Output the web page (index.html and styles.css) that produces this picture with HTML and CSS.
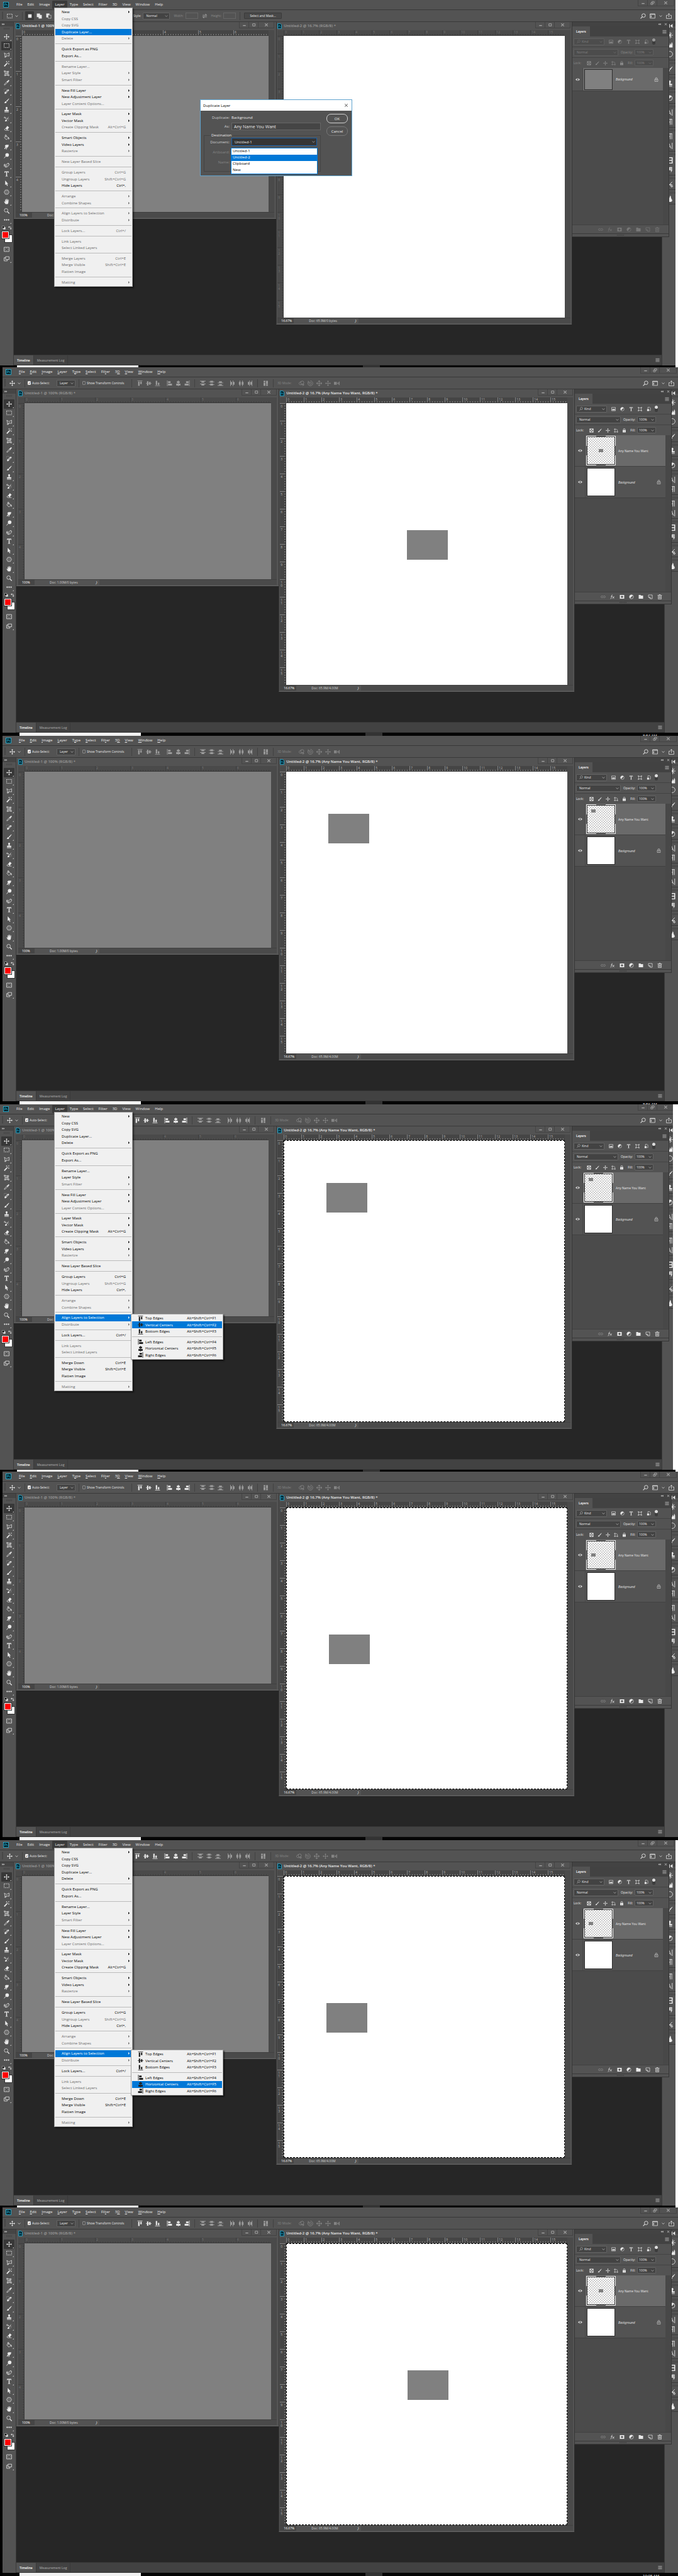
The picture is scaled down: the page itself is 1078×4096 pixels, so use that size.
FILE: index.html
```html
<!DOCTYPE html>
<html lang="en">
<head>
<meta charset="utf-8">
<title>Duplicate and align a layer</title>
<link rel="stylesheet" href="styles.css">
</head>
<body>
<svg class="sprite" aria-hidden="true">
  <symbol id="ps" viewBox="0 0 18 18"><rect x="1" y="1" width="16" height="16" fill="#001d26" stroke="#26c0e6" stroke-width="1.6"/><path d="M5 13V5h2.4a2.3 2.3 0 0 1 0 4.6H5M13.4 7.6c-2-.8-3 .2-2.6 1.2.4 1 2.800.9 2.600 2.400-.3 1.300-2 1.200-3 .6" fill="none" stroke="#26c0e6" stroke-width="1.300"/></symbol>
  <symbol id="psdoc" viewBox="0 0 12 15"><path d="M1 1h7l3 3v10H1z" fill="#001d26" stroke="#26b4dc" stroke-width="1.500"/><path d="M3.500 11V5.500H5a1.500 1.500 0 0 1 0 3H3.500M9 7.500c-1.500-.5-1.800.8-.8 1.300 1 .5.5 1.800-.9 1.200" fill="none" stroke="#26b4dc"/></symbol>
  <symbol id="move" viewBox="0 0 16 16"><path d="M8 2v12M2 8h12" stroke="currentColor" stroke-width="1.400"/><path d="M8 0l2.500 3.400h-5zM8 16l2.500-3.400h-5zM0 8l3.400-2.500v5zM16 8l-3.400-2.500v5z" fill="currentColor"/></symbol>
  <symbol id="marquee" viewBox="0 0 16 16"><path d="M1 2.500h14v11H1z" fill="none" stroke="currentColor" stroke-width="1.400" stroke-dasharray="3 1.700"/></symbol>
  <symbol id="lasso" viewBox="0 0 16 16"><path d="M4 12L1.500 2l6 4L15 2v9l-7-1-4 2c-2 0-2 3 0 2.500 1-.5 1-1.500 0-2.500m4-2l-3 5" fill="none" stroke="currentColor" stroke-width="1.300"/></symbol>
  <symbol id="wand" viewBox="0 0 16 16"><path d="M1.500 15L9 7" stroke="currentColor" stroke-width="3"/><path d="M9.500 6.500l2-2" stroke="currentColor" stroke-width="2"/><path d="M8 0v4M6 2h4M14 0v3M12.500 1.500h3M14 6v4M12 8h4" stroke="currentColor"/></symbol>
  <symbol id="crop" viewBox="0 0 16 16"><path d="M3 2l9 1 1 10-9 1zM1 1h3v3H1zM11 2h3v3h-3zM12 12h3v3h-3zM2 12h3v3H2zM7 3v11M3 8h10M10 3v11" fill="none" stroke="currentColor"/></symbol>
  <symbol id="dropper" viewBox="0 0 16 16"><path d="M1.500 14.500l1-3 6-6 2 2-6 6z" fill="none" stroke="currentColor" stroke-width="1.300"/><path d="M8 4l1-1 1 1 2.500-3c1.500-1.500 4 1 2.500 2.500L12 6l1 1-1 1z" fill="currentColor"/></symbol>
  <symbol id="heal" viewBox="0 0 16 16"><path d="M2 11l8-8 4-1 1 3-9 9-3 1z" fill="currentColor"/><path d="M6 9l4-4 2 2-4 4zM7 10l4-4M7 8l2 2" fill="none" stroke="#535353"/><path d="M1 9a4 4 0 0 1 7-7" fill="none" stroke="currentColor" stroke-dasharray="1 1"/></symbol>
  <symbol id="brush" viewBox="0 0 16 16"><path d="M14.500 1L7 8l2 2 6-8zM6 9c-3 0-2 3-5 5 4 1 7 0 7-3z" fill="currentColor"/></symbol>
  <symbol id="stamp" viewBox="0 0 16 16"><path d="M8 0a3 3 0 0 1 2 5c-1 1-.5 2-.5 3.500H14V12H2V8.500h4.500C6.500 7 7 6 6 5a3 3 0 0 1 2-5zM2 13.500h12V15H2z" fill="currentColor"/></symbol>
  <symbol id="history" viewBox="0 0 16 16"><path d="M14.500 0L8 8l2 1zM7 9c-3 0-2 3-4 5 4 1 6-1 6-3z" fill="currentColor"/><path d="M1 4h5M6 4v3M1 4l2-3" fill="none" stroke="currentColor" stroke-width="1.500"/><path d="M14 6c0 4-1 6-4 8" fill="none" stroke="currentColor" stroke-dasharray="1 1"/></symbol>
  <symbol id="eraser" viewBox="0 0 16 16"><path d="M5 9l5-7 5 4-5 7z" fill="currentColor"/><path d="M5 9l-3.500 3.500L4 14.500h11M5 9l5 4-1.500 1.500" fill="none" stroke="currentColor" stroke-width="1.300"/></symbol>
  <symbol id="bucket" viewBox="0 0 16 16"><path d="M1.500 8.500L7 3l6 6-5.500 5.500zM7 8V2c0-2-3-2-3 0v4" fill="none" stroke="currentColor" stroke-width="1.300"/><path d="M12 7c3 1 4 4 3 6s-2 0-2-2z" fill="currentColor"/></symbol>
  <symbol id="smudge" viewBox="0 0 16 16"><path d="M3 14c-2 1-2-1 0-3L5 7 3 6c0-3 3-4 6-4h5l-1 5-4 4-1 4H6l2-6z" fill="currentColor"/></symbol>
  <symbol id="dodge" viewBox="0 0 16 16"><circle cx="9.500" cy="6" r="5" fill="currentColor"/><path d="M6 9l-5 6" stroke="currentColor" stroke-width="1.600"/></symbol>
  <symbol id="pen" viewBox="0 0 16 16"><path d="M5 14c-2-5 3-10 8-11l2 3c-1 5-5 8-10 8zm0 0l5-6M4 5c-3 0-4 3-2 4s3-2 1-2-3 4 0 6M12 2l3 4" fill="none" stroke="currentColor" stroke-width="1.400"/></symbol>
  <symbol id="type" viewBox="0 0 16 16"><path d="M2 1h12v4h-1.300l-.7-2H9.300v10.500l2 .5v1H4.700v-1l2-.5V3H4l-.7 2H2z" fill="currentColor"/></symbol>
  <symbol id="arrow" viewBox="0 0 16 16"><path d="M4 0l9 10-4-.500 2.500 5-2 1L7 10.500 4 13z" fill="currentColor"/></symbol>
  <symbol id="hex" viewBox="0 0 16 16"><path d="M4.500 2h7L15 8l-3.500 6h-7L1 8z" fill="#6d6d6d" stroke="currentColor" stroke-width="1.200"/></symbol>
  <symbol id="hand" viewBox="0 0 16 16"><path d="M5 15C3 12 1 10 1 8c1-1 2 0 3 2V3c0-1 1.500-1 1.700 0L6 7l.500-6c0-1 1.700-1 1.700 0v6L9.500 1.500c.2-1 1.700-.8 1.600.2L11 7l1.300-4c.3-1 1.700-.6 1.500.4L13 10c0 3-1 4-2 5z" fill="currentColor"/></symbol>
  <symbol id="zoom" viewBox="0 0 16 16"><circle cx="6.500" cy="6" r="5" fill="none" stroke="currentColor" stroke-width="1.400"/><path d="M10 9.500l5.500 5.500" stroke="currentColor" stroke-width="2.200"/></symbol>
  <symbol id="dots" viewBox="0 0 16 16"><circle cx="2.500" cy="8" r="2" fill="currentColor"/><circle cx="8" cy="8" r="2" fill="currentColor"/><circle cx="13.500" cy="8" r="2" fill="currentColor"/></symbol>
  <symbol id="swap" viewBox="0 0 16 16"><path d="M3 5h8v8" fill="none" stroke="currentColor" stroke-width="1.800"/><path d="M5 1v8L0 5zM7 11h8l-4 5z" fill="currentColor"/></symbol>
  <symbol id="defaults" viewBox="0 0 16 16"><path d="M6 6h9v9H6z" fill="currentColor"/><path d="M1 1h9v9H1z" fill="#000" stroke="currentColor" stroke-width="1.500"/></symbol>
  <symbol id="mask" viewBox="0 0 16 16"><path d="M1 2h14v12H1z" fill="none" stroke="currentColor" stroke-width="1.400"/><circle cx="8" cy="8" r="3.800" fill="none" stroke="currentColor" stroke-dasharray="1 1"/></symbol>
  <symbol id="screenmode" viewBox="0 0 16 16"><path d="M5 2h10v8H5zM5 5H1v9h9v-4" fill="none" stroke="currentColor" stroke-width="1.400"/></symbol>
  <symbol id="chev" viewBox="0 0 8 8"><path d="M1 2.500l3 3 3-3" fill="none" stroke="currentColor" stroke-width="1.200"/></symbol>
  <symbol id="tri" viewBox="0 0 4 8"><path d="M0 0l4 4-4 4z" fill="currentColor"/></symbol>
  <symbol id="search" viewBox="0 0 16 16"><circle cx="9.500" cy="6.500" r="5" fill="none" stroke="currentColor" stroke-width="1.600"/><path d="M6 10l-5 5" stroke="currentColor" stroke-width="1.800"/></symbol>
  <symbol id="panel" viewBox="0 0 16 16"><path d="M1 2h14v12H1z" fill="none" stroke="currentColor" stroke-width="1.300"/><path d="M1 3h14M4 6v6" stroke="currentColor" stroke-width="2"/></symbol>
  <symbol id="share" viewBox="0 0 16 16"><path d="M5 6H1v9h14V6h-4M8 11V1M5 4l3-3 3 3" fill="none" stroke="currentColor" stroke-width="1.300"/></symbol>
  <symbol id="min" viewBox="0 0 16 16"><path d="M3 9h10v3H3z" fill="currentColor"/></symbol>
  <symbol id="max" viewBox="0 0 16 16"><path d="M4 4h9v8H4z" fill="none" stroke="currentColor" stroke-width="2.200"/></symbol>
  <symbol id="restore" viewBox="0 0 16 16"><path d="M6 3h8v6H6zM2 8h7v6H2z" fill="none" stroke="currentColor" stroke-width="2"/></symbol>
  <symbol id="close" viewBox="0 0 16 16"><path d="M3 3l10 10M13 3L3 13" stroke="currentColor" stroke-width="2.400"/></symbol>
  <symbol id="closethin" viewBox="0 0 16 16"><path d="M3 3l10 10M13 3L3 13" stroke="currentColor" stroke-width="1.600"/></symbol>
  <symbol id="burger" viewBox="0 0 16 16"><path d="M1 3h14M1 6.500h14M1 10h14M1 13.500h14" stroke="currentColor" stroke-width="1.500"/></symbol>
  <symbol id="collapse" viewBox="0 0 16 16"><path d="M8 3v10L2 8zM15 3v10L9 8z" fill="currentColor"/></symbol>
  <symbol id="expand" viewBox="0 0 16 16"><path d="M1 3v10l6-5zM8 3v10l6-5z" fill="currentColor"/></symbol>
  <symbol id="a-top" viewBox="0 0 16 16"><path d="M1 0h14v1.500H1zM3 3h4v12H3zM9 3h4v7H9z" fill="currentColor"/></symbol>
  <symbol id="a-vc" viewBox="0 0 16 16"><path d="M0 7h16v1.600H0zM3 2h4v12H3zM9 4h4v8H9z" fill="currentColor"/></symbol>
  <symbol id="a-bot" viewBox="0 0 16 16"><path d="M1 14h14v1.500H1zM3 1h4v12H3zM9 6h4v7H9z" fill="currentColor"/></symbol>
  <symbol id="a-left" viewBox="0 0 16 16"><path d="M1 0h1.500v16H1zM4 2h7v5H4zM4 9h11v5H4z" fill="currentColor"/></symbol>
  <symbol id="a-hc" viewBox="0 0 16 16"><path d="M7.200 0h1.600v16H7.200zM4 2h8v5H4zM2 9h12v5H2z" fill="currentColor"/></symbol>
  <symbol id="a-right" viewBox="0 0 16 16"><path d="M13.500 0H15v16h-1.500zM5 2h7v5H5zM1 9h11v5H1z" fill="currentColor"/></symbol>
  <symbol id="d-top" viewBox="0 0 16 16"><path d="M0 1h16v1.500H0zM4 2h8v4H4zM0 9h16v1.500H0zM4 10h8v4H4z" fill="currentColor"/></symbol>
  <symbol id="d-vc" viewBox="0 0 16 16"><path d="M0 3h16v1.500H0zM4 1h8v5H4zM0 11h16v1.500H0zM4 9h8v5H4z" fill="currentColor"/></symbol>
  <symbol id="d-bot" viewBox="0 0 16 16"><path d="M0 6h16v1.500H0zM4 2h8v5H4zM0 13.500h16V15H0zM4 10h8v4H4z" fill="currentColor"/></symbol>
  <symbol id="d-left" viewBox="0 0 16 16"><path d="M2 0h1.500v16H2zM3 4h4v8H3zM9 0h1.500v16H9zM10 4h4v8h-4z" fill="currentColor"/></symbol>
  <symbol id="d-hc" viewBox="0 0 16 16"><path d="M3.500 0H5v16H3.500zM1.500 4h5v8h-5zM11 0h1.500v16H11zM9.500 4h5v8h-5z" fill="currentColor"/></symbol>
  <symbol id="d-right" viewBox="0 0 16 16"><path d="M6 0h1.500v16H6zM2 4h4v8H2zM13 0h1.500v16H13zM9 4h4v8H9z" fill="currentColor"/></symbol>
  <symbol id="auto" viewBox="0 0 16 16"><path d="M2 1h5v4H2zM2 6h5v9H2zM9 1h5v9H9zM9 11h5v4H9z" fill="currentColor"/></symbol>
  <symbol id="orbit" viewBox="0 0 16 16"><circle cx="10" cy="6" r="4.500" fill="none" stroke="currentColor" stroke-width="1.500"/><path d="M7 3c-7 2-9 8-2 9h9M11 9l4 3-4 3" fill="none" stroke="currentColor" stroke-width="1.500"/></symbol>
  <symbol id="roll" viewBox="0 0 16 16"><circle cx="8" cy="8" r="3" fill="none" stroke="currentColor" stroke-width="1.500"/><path d="M3 3a7 7 0 1 0 5-2M2 1v4h4" fill="none" stroke="currentColor" stroke-width="1.500"/></symbol>
  <symbol id="slide" viewBox="0 0 16 16"><path d="M8 6V0L5 4M8 0l3 4M8 10v6l-3-4m3 4l3-4M6 8H0l4-3M0 8l4 3M10 8h6l-4-3m4 3l-4 3" fill="none" stroke="currentColor" stroke-width="1.500"/><circle cx="8" cy="8" r="2" fill="currentColor"/></symbol>
  <symbol id="cam" viewBox="0 0 16 16"><path d="M0 4h8v8H0zM9 8l4-4v8zM14 3l2 0v10l-2 0z" fill="currentColor"/></symbol>
  <symbol id="sel-new" viewBox="0 0 16 16"><path d="M3 3h10v10H3z" fill="currentColor"/></symbol>
  <symbol id="sel-add" viewBox="0 0 16 16"><path d="M1 1h9v4h5v10H6v-4H1z" fill="currentColor"/></symbol>
  <symbol id="sel-sub" viewBox="0 0 16 16"><path d="M1 1h9v4H6v7H1z" fill="currentColor"/><path d="M6.500 5.500h8v9h-8z" fill="none" stroke="currentColor"/></symbol>
  <symbol id="exchange" viewBox="0 0 16 16"><path d="M2 5h8V1l5 5.500H2zM14 11H6v4L1 9.500h13z" fill="currentColor"/></symbol>
  <symbol id="f-image" viewBox="0 0 16 16"><path d="M1 2h14v12H1z" fill="none" stroke="currentColor" stroke-width="1.500"/><path d="M3 12V9l2-2 2 2 3-3 3 3v3z" fill="currentColor"/></symbol>
  <symbol id="f-adjust" viewBox="0 0 16 16"><circle cx="8" cy="8" r="6.300" fill="none" stroke="currentColor" stroke-width="1.300"/><path d="M3.500 12.500a6.300 6.300 0 0 1 9-9z" fill="currentColor"/></symbol>
  <symbol id="f-shape" viewBox="0 0 16 16"><path d="M3.500 3.500h9v9h-9zM1 1h3v3H1zM12 1h3v3h-3zM12 12h3v3h-3zM1 12h3v3H1z" fill="none" stroke="currentColor" stroke-width="1.200"/></symbol>
  <symbol id="f-smart" viewBox="0 0 16 16"><path d="M5 7V1h6l3 3v9h-4" fill="none" stroke="currentColor" stroke-width="1.400"/><path d="M2 8h7v7H2z" fill="currentColor"/></symbol>
  <symbol id="l-trans" viewBox="0 0 16 16"><path d="M1.500 1.500h13v13h-13z" fill="none" stroke="currentColor" stroke-width="1.500"/><path d="M2 2h4v4H2zM10 2h4v4h-4zM6 6h4v4H6zM2 10h4v4H2zM10 10h4v4h-4z" fill="currentColor"/></symbol>
  <symbol id="l-board" viewBox="0 0 16 16"><path d="M4 0v16M0 4h11l2 2v10M0 13h16" fill="none" stroke="currentColor" stroke-width="1.300"/></symbol>
  <symbol id="lock" viewBox="0 0 16 16"><path d="M5 7V4a3 3 0 0 1 6 0v3" fill="none" stroke="currentColor" stroke-width="1.700"/><path d="M2.500 6.500h11V15h-11z" fill="currentColor"/><path d="M7.500 9.500h1v3h-1z" fill="#535353"/></symbol>
  <symbol id="lockline" viewBox="0 0 16 16"><path d="M5 7V4a3 3 0 0 1 6 0v3M2.500 7h11v8h-11z" fill="none" stroke="currentColor" stroke-width="1.300"/><circle cx="8" cy="11" r="1.200" fill="currentColor"/></symbol>
  <symbol id="eye" viewBox="0 0 16 16"><path d="M.5 8C4 2.500 12 2.500 15.500 8 12 13.500 4 13.500.5 8z" fill="currentColor"/><circle cx="8" cy="8" r="3" fill="#4a4a4a"/><circle cx="9" cy="7" r="1" fill="currentColor"/></symbol>
  <symbol id="link" viewBox="0 0 16 16"><path d="M7 5H4a3 3 0 0 0 0 6h3M9 5h3a3 3 0 0 1 0 6H9M5 8h6" fill="none" stroke="currentColor" stroke-width="1.400"/></symbol>
  <symbol id="fx" viewBox="0 0 16 16"><path d="M8 2C5 1 5 5 4.500 8S3 15 1 14M2.500 6.500h5M8 7c3 0 2 6 5 6M14 7c-2 0-4 6-7 6" fill="none" stroke="currentColor" stroke-width="1.400"/></symbol>
  <symbol id="addmask" viewBox="0 0 16 16"><path d="M1 2h14v12H1z" fill="currentColor"/><circle cx="8" cy="8" r="3.300" fill="#535353"/></symbol>
  <symbol id="folder" viewBox="0 0 16 16"><path d="M1 2h6l1 2h7v10H1z" fill="currentColor"/></symbol>
  <symbol id="newlayer" viewBox="0 0 16 16"><path d="M2 2h12v12H8L2 9zM2 9h6v5" fill="none" stroke="currentColor" stroke-width="1.400"/></symbol>
  <symbol id="trash" viewBox="0 0 16 16"><path d="M1 3h14M6 3V1h4v2M3 4v11h10V4M6 5v8M8 5v8M10 5v8" fill="none" stroke="currentColor" stroke-width="1.300"/></symbol>
  <symbol id="k-nav" viewBox="0 0 16 16"><path d="M2 8h14M9 0v16M4 2l9 12M13 2L4 14" fill="none" stroke="currentColor" stroke-width="1.400"/></symbol>
  <symbol id="k-histo" viewBox="0 0 16 16"><path d="M1 15V9l3-2 3 3 2-6 2 5 2-8 2 5v9z" fill="currentColor"/></symbol>
  <symbol id="k-circle" viewBox="0 0 16 16"><circle cx="8" cy="8" r="7" fill="none" stroke="currentColor" stroke-width="1.300"/></symbol>
  <symbol id="k-char" viewBox="0 0 16 16"><path d="M1 14L6 2l5 12M3 10h6M14 0v16" fill="none" stroke="currentColor" stroke-width="1.400"/></symbol>
  <symbol id="k-para" viewBox="0 0 16 16"><path d="M9 1v14M13 1v14M14 1H7a3 3 0 0 0 0 7h2" fill="none" stroke="currentColor" stroke-width="1.400"/></symbol>
  <symbol id="k-lib" viewBox="0 0 16 16"><path d="M2 1h12v14H2zM2 8h12" fill="none" stroke="currentColor" stroke-width="2.400"/></symbol>
  <symbol id="k-note" viewBox="0 0 16 16"><path d="M2 1h12v8l-3 6V9H2z" fill="currentColor"/><path d="M8 4h6M8 7h6" stroke="#535353"/></symbol>
  <symbol id="k-cut" viewBox="0 0 16 16"><path d="M14 2L7 9l4 3M7 9h7" fill="none" stroke="currentColor" stroke-width="1.500"/><circle cx="13" cy="13" r="2" fill="none" stroke="currentColor" stroke-width="1.500"/></symbol>
  <symbol id="k-drop" viewBox="0 0 16 16"><path d="M9 0c3 2 1 5 3 8 4 5 2 8-4 8S2 12 6 8z" fill="currentColor"/></symbol>
</svg>
<main id="steps"></main>
<script src="script.js"></script>
</body>
</html>
```
FILE: styles.css
```css
* { box-sizing: border-box; }
body {
  margin: 0;
  background: #fff;
  color: #e8e8e8;
  font: 5px/8px "Open Sans", "Noto Sans", sans-serif;
}
.sprite { position: absolute; width: 0; height: 0; }
ul, h2, p, figure { margin: 0; padding: 0; list-style: none; font-size: inherit; font-weight: inherit; }
button, input, select { font: inherit; color: inherit; margin: 0; padding: 0; border: 0; background: none; border-radius: 0; appearance: none; min-width: 0; }
button { display: flex; align-items: center; justify-content: center; }
a { color: inherit; text-decoration: none; }
.icon { width: 9px; height: 9px; flex: none; display: block; }
.icon.s { width: 5px; height: 5px; }
.icon.m { width: 7px; height: 7px; }

/* one captured step: the application window and the strip of taskbar below it */
.step { position: relative; display: flow-root; }
.step.in { padding-left: 4px; background: #000; }
.step.out { padding-right: 4px; }
.step.cut::after { content: ""; position: absolute; z-index: 9; top: 0; right: 0; width: 8px; height: 581px; background: #fff; }
.app { position: relative; height: 581px; background: #535353; display: flex; flex-direction: column; }
.taskbar { height: 5px; background: #050505; overflow: hidden; display: flex; }
.first .taskbar, .short .taskbar { height: 3px; }
.taskbar i { width: 193px; margin-left: 27px; background: #f2f2f2; }
.taskbar b { width: 27px; margin-left: auto; margin-right: 414px; background: #333; }
.taskbar time { width: 56px; padding-top: 1px; font-size: 6px; line-height: 8px; color: #fff; white-space: nowrap; }

.menubar { display: flex; align-items: center; height: 16px; flex: none; font-size: 6px; border-bottom: 1px solid #383838; }
.menubar .logo { width: 9px; height: 9px; margin: 0 8px 0 5px; }
.menubar nav { display: flex; height: 13px; align-self: flex-start; margin-top: 1px; flex: 1; }
.menubar nav a { padding: 2px 4px; line-height: 9px; }
.menubar nav a.open { background: #3a3a3a; border-radius: 1px 1px 0 0; }
.wbtns { display: flex; height: 10px; align-self: flex-start; border: 1px solid #444; border-top: 0; color: #a6a6a6; margin-right: 2px; }
.wbtns button { width: 15px; border-right: 1px solid #444; }
.wbtns button:last-child { width: 26px; border: 0; }

.options { display: flex; align-items: center; height: 18px; flex: none; }
.grip { width: 2px; height: 12px; margin-left: 3px; background: repeating-linear-gradient(#3c3c3c 0 1px, #535353 1px 2px); }
.options .tool { width: 30px; display: flex; align-items: center; justify-content: center; gap: 4px; }
.sep { width: 1px; height: 13px; background: #424242; flex: none; }
.check { display: flex; align-items: center; gap: 2px; padding-left: 4px; white-space: nowrap; }
.check input { width: 5px; height: 6px; border: 1px solid #8a8a8a; border-radius: 1px; }
.check input:checked { background: #e8e8e8; border-color: #e8e8e8; }
.check input:checked::after { content: "✓"; display: block; color: #222; font: bold 5px/4px "DejaVu Sans", sans-serif; }
.check.auto { width: 50px; }
.check.show { width: 83px; padding-left: 5px; }
.pick { position: relative; display: flex; background: #434343; border: 1px solid #636363; border-radius: 1px; height: 11px; align-items: center; }
.pick select, .pick input { width: 100%; height: 9px; padding: 0 8px 0 4px; line-height: 8px; }
.pick .icon { position: absolute; right: 2px; pointer-events: none; color: #bbb; }
.pick.layer { width: 30px; margin-right: 5px; }
.pick.style { width: 43px; }
.cluster { display: flex; padding: 0 5px; gap: 5px; color: #9c9c9c; }
.cluster div { display: flex; }
.cluster button { width: 14px; height: 12px; }
.cluster.on { color: #e6e6e6; }
.mode { display: flex; align-items: center; padding-left: 6px; color: #858585; flex: 1; }
.mode span { width: 31px; white-space: nowrap; }
.mode button { width: 14px; height: 12px; }
.shapes { display: flex; padding-left: 4px; width: 176px; gap: 1px; }
.shapes button { width: 14px; height: 14px; }
.shapes .on { background: #3a3a3a; border-radius: 1px; }
.field { display: flex; align-items: center; gap: 3px; color: #8a8a8a; }
.field.lit { color: #e4e4e4; }
.field > input { width: 20px; height: 10px; border: 1px solid #666; }
.marq { display: flex; align-items: center; gap: 6px; flex: 1; }
.marq .mask { border: 1px solid #3a3a3a; background: #484848; width: 60px; height: 10px; border-radius: 1px; white-space: nowrap; }
.marq .icon { color: #a0a0a0; }
.right { display: flex; align-items: center; gap: 6px; margin-right: 6px; }

.body { flex: 1; display: flex; min-height: 0; background: #262626; }
.tools { width: 22px; background: #535353; border-right: 1px solid #3a3a3a; border-top: 1px solid #383838; display: flex; flex-direction: column; flex: none; }
.tools .head { height: 7px; background: #454545; color: #ccc; padding: 1px 3px; }
.tools .rub { width: 10px; height: 3px; margin: 2px auto 4px; background: repeating-linear-gradient(90deg, #444 0 1px, #535353 1px 2px); }
.toolgrid { display: grid; grid-auto-rows: 1fr; height: 306px; flex: none; justify-items: center; }
.toolgrid button { width: 17px; height: 100%; position: relative; border-radius: 1px; }
.toolgrid button::after, .modebtn.more::after { content: ""; position: absolute; right: 1px; bottom: 1px; border: 1px solid; border-color: transparent #bbb #bbb transparent; }
.toolgrid .on { background: #383838; }
.toolgrid .plain::after { display: none; }
.mini { display: flex; justify-content: center; gap: 4px; padding: 2px 0 3px; }
.mini .icon { width: 6px; height: 6px; }
.colors { position: relative; width: 16px; height: 17px; margin: 0 auto 4px; }
.colors b, .colors i { position: absolute; width: 11px; height: 11px; outline: 1px solid #333; }
.colors b { left: 0; top: 0; background: #f00; border: 1px solid #fff; z-index: 1; }
.colors i { right: 0; bottom: 0; background: #fff; }
.modebtn { position: relative; width: 17px; height: 15px; margin: 0 auto; flex: none; }

.center { flex: 1; display: flex; flex-direction: column; min-width: 0; }
.docs { flex: 1; display: flex; align-items: flex-start; padding-right: 143px; }
.doc { background: #535353; border-top: 1px solid #3a3a3a; border-bottom: 1px solid #636363; box-shadow: 1px 0 #2b2b2b; min-width: 0; }
.doc.one { flex: 416 1 0; padding: 0 3px 1px; }
.doc.two { flex: 471 1 0; padding: 0 2px 1px 1px; border-left: 1px solid #363636; }
.title { display: flex; height: 13px; color: #9c9c9c; gap: 3px; font-size: 6px; }
.title .icon { width: 7px; height: 9px; margin-top: 2px; }
.title .wbtns .icon { height: 7px; margin: 0; }
.title h2 { flex: 1; white-space: nowrap; line-height: 13px; font-weight: 600; }
.active .title h2 { color: #ececec; }
.title .wbtns { margin: 0; }
.title .wbtns button:last-child { width: 24px; }
.frame { display: grid; grid-template-columns: 10px 1fr 9px; grid-template-rows: 9px auto 9px; background: #4a4a4a; color: #747474; line-height: 6px; }
.active .frame { color: #b4b4b4; }
.hr, .vr { --t: #3f3f3f; overflow: hidden; display: flex; }
.active .hr, .active .vr { --t: #828282; background-color: #454545; }
.hr { border-bottom: 1px solid #3a3a3a; background: repeating-linear-gradient(90deg, var(--t) 0 1px, transparent 1px var(--u)), repeating-linear-gradient(90deg, var(--t) 0 1px, transparent 1px 4px) 0 100% / 100% 2px no-repeat; }
.vr { border-right: 1px solid #3a3a3a; flex-direction: column; background: repeating-linear-gradient(var(--t) 0 1px, transparent 1px var(--u)), repeating-linear-gradient(var(--t) 0 1px, transparent 1px 4px) 100% 0 / 2px 100% no-repeat; }
.one { --u: 56px; }
.two { --u: 28px; }
.hr span { flex: 0 0 var(--u); padding: 0 2px; }
.vr span { flex: 0 0 var(--u); width: 5px; padding: 3px 1px; line-height: 5px; word-break: break-all; }
.one .vr, .one .canvas { height: 280px; }
.two .vr, .two .canvas { height: 448px; }
.canvas { position: relative; background: #fff; }
.one .canvas { background: #808080; }
.ants { border: 1px dashed #000; }
.patch { position: absolute; background: #808080; width: 65px; height: 47px; }
.at-start { left: 15%; top: 15%; }
.at-left { left: 15%; top: 45%; }
.at-mid { left: 43%; top: 45%; }
.status { grid-column: 1 / 4; display: flex; border-top: 1px solid #414141; color: #cfcfcf; line-height: 8px; }
.status b { width: 26px; padding-left: 6px; font-weight: 400; background: #454545; color: #fff; }
.status span { width: 103px; padding: 0 3px 0 24px; display: flex; justify-content: space-between; background: #535353; white-space: nowrap; }

.timeline { height: 17px; flex: none; display: flex; background: #424242; border-top: 1px solid #383838; border-bottom: 1px solid #383838; font-weight: 600; color: #9c9c9c; }
.timeline a { padding: 4px 5px; border-right: 1px solid #3a3a3a; white-space: nowrap; }
.timeline a.on { background: #535353; color: #fff; }
.timeline button { margin-left: auto; width: 14px; color: #bbb; }

.dock { width: 22px; flex: none; background: #535353; border-left: 1px solid #3a3a3a; border-top: 1px solid #383838; }
.dock .head { height: 7px; background: #454545; display: flex; justify-content: flex-end; padding: 1px 1px; }
.dock ul { display: flex; flex-direction: column; justify-content: space-around; align-items: flex-end; padding: 6px 1px 1px 0; height: 23px; border-bottom: 1px solid #3a3a3a; background: repeating-linear-gradient(90deg, #444 0 1px, transparent 1px 2px) 100% 3px / 9px 3px no-repeat; }
.dock ul.two { height: 38px; }
.dock ul.three { height: 54px; }
.dock .icon { width: 16px; height: 10px; }

.layers { position: absolute; top: 34px; right: 10px; width: 155px; height: 343px; background: #535353; border: 1px solid #363636; display: flex; flex-direction: column; }
.layers .head { height: 7px; background: #434343; display: flex; justify-content: flex-end; gap: 5px; padding: 1px 2px; color: #ccc; flex: none; }
.layers .tabs { height: 16px; flex: none; display: flex; justify-content: space-between; background: #424242; }
.layers .tabs a { background: #535353; padding: 4px 6px; color: #fff; font-weight: 600; width: 28px; }
.layers .tabs button { width: 14px; color: #bbb; }
.row { display: flex; align-items: center; height: 17px; flex: none; padding-left: 2px; border-bottom: 1px solid #434343; }
.row.last { border: 0; height: 16px; }
.pick.kind { width: 49px; margin-right: 3px; }
.pick.kind select { padding-left: 12px; }
.pick.kind .find { left: 4px; right: auto; width: 6px; height: 6px; }
.row > .icon { margin: 0 3px; width: 7px; height: 7px; }
.row.filter > .icon { margin: 0 3px 0 4px; }
.toggle { width: 5px; height: 10px; border-radius: 3px; background: #3c3c3c; margin-left: 3px; }
.toggle::before { content: ""; display: block; width: 5px; height: 5px; border-radius: 3px; background: #ddd; }
.pick.blend { width: 71px; }
.row label { display: flex; align-items: center; margin-left: auto; margin-right: 24px; gap: 3px; white-space: nowrap; }
.pick.num { width: 30px; height: 10px; }
.pick.num input { padding: 0 9px 0 2px; border-right: 0; }
.row .lk { width: 18px; }
.list { flex: 1; background: #4b4b4b; border-right: 9px solid #484848; }
.ly { display: flex; align-items: center; height: 50px; background: #535353; border-bottom: 1px solid #414141; }
.ly button { width: 17px; align-self: stretch; border-right: 1px solid #484848; }
.ly .body-cell { flex: 1; align-self: stretch; display: flex; align-items: center; padding: 0 7px 0 2px; gap: 5px; }
.ly.sel .body-cell { background: #6a6a6a; }
.ly .body-cell span { flex: 1; white-space: nowrap; }
.ly em { flex: 1; }
.thumb { position: relative; width: 45px; height: 45px; border: 1px solid #2e2e2e; background: #fff; }
.thumb.low { height: 33px; background: #808080; }
.ly.single { height: 37px; }
.thumb.clear { background: conic-gradient(#ccc 25%, #fff 0 50%, #ccc 0 75%, #fff 0) 0 0 / 4px 4px; }
.thumb .patch { width: 7px; height: 5px; }
.thumb svg { position: absolute; left: -2px; top: -2px; width: 47px; height: 47px; }
.foot { height: 15px; flex: none; display: flex; align-items: center; justify-content: flex-end; padding-right: 14px; gap: 7px; border-top: 1px solid #414141; border-bottom: 1px solid #3a3a3a; }
.foot .icon { width: 8px; height: 8px; }
.foot .icon:first-child { color: #888; }
.pull { height: 4px; flex: none; background: repeating-linear-gradient(90deg, #3f3f3f 0 1px, transparent 1px 2px) 50% 1px / 11px 2px no-repeat; }
.dim .row { color: #8c8c8c; }
.dim .foot, .dim .foot .icon:first-child { color: #777; }
.dim .row .pick { border-color: #5e5e5e; background: #4c4c4c; color: #808080; }
.dim .row .pick .icon { color: #707070; }
.dim .toggle::before { background: #999; }

.menu { position: absolute; z-index: 5; background: #f0f0f0; border: 1px solid #a0a0a0; color: #000; font-size: 6px; box-shadow: 2px 2px 2px #0008; display: flex; flex-direction: column; padding: 1px; }
.menu li { flex: 5 1 0; min-height: 0; display: flex; align-items: center; padding: 0 3px 0 10px; white-space: nowrap; }
.menu li.line { flex-grow: 3; padding: 0; }
.menu li.line::before { content: ""; flex: 1; height: 1px; background: #bcbcbc; }
.menu li span { flex: 1; }
.menu li kbd { font: inherit; margin-right: 6px; }
.menu li .icon { width: 2px; height: 4px; }
.menu li.off { color: #6d6d6d; }
.menu li.hot { background: #0078d7; color: #fff; }
.menu.main { left: 86px; top: 12px; width: 125px; height: 444px; }
.menu.sub { left: 208px; top: 333px; width: 147px; height: 73px; }
.menu.sub li { padding-left: 9px; }
.menu.sub li.line { padding: 0; }
.menu.sub .icon { width: 9px; height: 9px; margin-right: 3px; color: #222; }

.dialog { position: absolute; z-index: 6; left: 318px; top: 158px; width: 242px; height: 122px; border: 1px solid #5fa3cf; background: #535353; font-size: 6px; display: flex; flex-direction: column; }
.dialog header { height: 17px; background: #fff; color: #000; display: flex; align-items: center; justify-content: space-between; padding: 0 5px 0 4px; }
.dialog form { flex: 1; display: flex; gap: 9px; padding: 5px 6px 5px 5px; }
.dialog .fields { flex: 1; position: relative; }
.line2 { display: grid; grid-template-columns: 41px 1fr; align-items: center; gap: 3px; height: 12px; }
.line2 label, .line2 b { text-align: right; font-weight: 400; color: #d0d0d0; }
.line2 input { height: 12px; border: 1px solid #666; background: #454545; padding: 0 3px; font-size: 7px; }
.line2 + .line2 { margin-top: 2px; }
.dialog fieldset { margin: 4px 0 0; padding: 0 5px 0 0; border: 1px solid #444; height: 62px; }
.dialog legend { margin-left: 9px; padding: 0 2px; line-height: 8px; }
.dialog fieldset .line2 { grid-template-columns: 40px 1fr; height: 13px; margin: 0 0 3px; }
.dialog fieldset .off { color: #858585; }
.pick.open { height: 13px; background: #353535; border-color: #1a62ab; border-radius: 0; }
.drop { position: absolute; left: 43px; right: 5px; top: 54px; background: #fff; color: #000; border: 1px solid #0078d7; padding: 0; z-index: 2; }
.drop li { height: 10px; line-height: 9px; padding-left: 2px; }
.drop .hot { background: #0078d7; color: #fff; }
.acts { width: 34px; display: flex; flex-direction: column; gap: 5px; }
.acts button { height: 15px; border: 1px solid #777; border-radius: 7px; }
.acts button:first-child { border-color: #d0d0d0; }
```
FILE: script.js
```js
const icon = (id, cls = "") => `<svg class="icon ${cls}" aria-hidden="true"><use href="#${id}"/></svg>`;
const btn = (id, label, cls = "", size = "") => `<button type="button" class="${cls}" aria-label="${label}">${icon(id, size)}</button>`;
const range = n => Array.from({ length: n }, (_, i) => i);

// a leading "-" marks a disabled entry, ">" a submenu, "|" separates the shortcut
const LAYER_MENU = [
  ["New>", "Copy CSS", "Copy SVG", "Duplicate Layer...", "Delete>"],
  ["Quick Export as PNG", "Export As..."],
  ["Rename Layer...", "Layer Style>", "-Smart Filter>"],
  ["New Fill Layer>", "New Adjustment Layer>", "-Layer Content Options..."],
  ["Layer Mask>", "Vector Mask>", "Create Clipping Mask|Alt+Ctrl+G"],
  ["Smart Objects>", "Video Layers>", "-Rasterize>"],
  ["New Layer Based Slice"],
  ["Group Layers|Ctrl+G", "-Ungroup Layers|Shift+Ctrl+G", "Hide Layers|Ctrl+,"],
  ["-Arrange>", "-Combine Shapes>"],
  ["Align Layers to Selection>", "-Distribute>"],
  ["Lock Layers...|Ctrl+/"],
  ["-Link Layers", "-Select Linked Layers"],
  ["Merge Down|Ctrl+E", "Merge Visible|Shift+Ctrl+E", "Flatten Image"],
  ["-Matting>"]
];
// entries unavailable while only the background layer exists
const OFF_FOR_BACKGROUND = ["Copy CSS", "Copy SVG", "Delete", "Rename Layer...", "Layer Style", "Create Clipping Mask",
  "New Layer Based Slice", "Group Layers", "Align Layers to Selection", "Lock Layers...", "Merge Down", "Merge Visible", "Flatten Image"];
const ALIGN_MENU = [
  ["a-top", "Top Edges", 1], ["a-vc", "Vertical Centers", 2], ["a-bot", "Bottom Edges", 3], null,
  ["a-left", "Left Edges", 4], ["a-hc", "Horizontal Centers", 5], ["a-right", "Right Edges", 6]
];
const TOOLS = ["move", "marquee", "lasso", "wand", "crop", "dropper", "heal", "brush", "stamp", "history", "eraser",
  "bucket", "smudge", "dodge", "pen", "type", "arrow", "hex", "hand", "zoom", "dots"];
const DOCK = [["k-nav", "k-histo", "k-circle"], ["brush"], ["stamp"], ["f-adjust"], ["k-char", "k-para"],
  ["k-para", "k-char"], ["k-lib", "k-note"], ["k-cut"], ["k-drop"]];

const STEPS = [
  { menu: "Duplicate Layer...", first: true },
  { pos: "mid", clock: "8:54 AM" },
  { pos: "start", clock: "8:56 AM" },
  { pos: "start", menu: "Align Layers to Selection", sub: "Vertical Centers", ants: true, cut: true, short: true },
  { pos: "left", ants: true },
  { pos: "left", menu: "Align Layers to Selection", sub: "Horizontal Centers", ants: true, short: true },
  { pos: "mid", ants: true, clock: "10:08 AM" }
];

function menu(s) {
  const rows = LAYER_MENU.map(group => group.map(raw => {
    let off = raw[0] === "-";
    const arrow = raw.endsWith(">");
    let [name, key] = raw.replace(/^-|>$/g, "").split("|");
    if (s.first && OFF_FOR_BACKGROUND.includes(name)) off = true;
    if (s.first && name === "Merge Down") name = "Merge Layers";
    const cls = name === s.menu ? "hot" : off ? "off" : "";
    return `<li class="${cls}" role="menuitem"><span>${name}</span>${key ? `<kbd>${key}</kbd>` : ""}${arrow ? icon("tri") : ""}</li>`;
  }).join("")).join('<li class="line" role="separator"></li>');
  const sub = s.sub ? `<ul class="menu sub" role="menu">` + ALIGN_MENU.map(e => e
    ? `<li role="menuitem" class="${e[1] === s.sub ? "hot" : ""}">${icon(e[0])}<span>${e[1]}</span><kbd>Alt+Shift+Ctrl+F${e[2]}</kbd></li>`
    : '<li class="line" role="separator"></li>').join("") + "</ul>" : "";
  return `<ul class="menu main" role="menu">${rows}</ul>${sub}`;
}

function menubar(s) {
  const names = ["_File", "_Edit", "_Image", "_Layer", "T_ype", "_Select", "Fil_ter", "3_D", "_View", "_Window", "_Help"];
  const links = names.map(n => {
    const text = s.menu ? n.replace("_", "") : n.replace(/_(.)/, "<u>$1</u>");
    return `<a href="#" class="${s.menu && n === "_Layer" ? "open" : ""}">${text}</a>`;
  }).join("");
  return `<header class="menubar">${icon("ps", "logo")}<nav>${links}</nav>${windowButtons("restore")}</header>`;
}
const windowButtons = mid => `<div class="wbtns">${btn("min", "Minimize", "", "m")}${btn(mid, "Resize", "", "m")}${btn("close", "Close", "", "m")}</div>`;
const buttons = ids => `<div>${ids.map(i => btn(i, i)).join("")}</div>`;

function options(s) {
  const right = `<div class="right">${icon("search")}${icon("panel")}${icon("chev", "s")}${icon("share")}</div>`;
  if (s.first) return `<div class="options"><i class="grip"></i><div class="tool">${icon("marquee")}${icon("chev", "s")}</div><i class="sep"></i>
    <div class="shapes">${btn("sel-new", "New selection", "on")}${btn("sel-add", "Add")}${btn("sel-sub", "Subtract")}</div>
    <div class="marq"><label class="field lit">Style:<span class="pick style"><select><option>Normal</option></select>${icon("chev", "s")}</span></label>
    <label class="field">Width:<input type="text" disabled></label>${icon("exchange")}
    <label class="field">Height:<input type="text" disabled></label><i class="sep"></i>
    <button type="button" class="mask">Select and Mask...</button></div>${right}</div>`;
  return `<div class="options"><i class="grip"></i><div class="tool">${icon("move")}${icon("chev", "s")}</div><i class="sep"></i>
    <label class="check auto"><input type="checkbox" checked>Auto-Select:</label>
    <span class="pick layer"><select aria-label="Auto-select target"><option>Layer</option></select>${icon("chev", "s")}</span><i class="sep"></i>
    <label class="check show"><input type="checkbox">Show Transform Controls</label><i class="sep"></i>
    <div class="cluster ${s.ants ? "on" : ""}">${buttons(["a-top", "a-vc", "a-bot"])}${buttons(["a-left", "a-hc", "a-right"])}</div><i class="sep"></i>
    <div class="cluster">${buttons(["d-top", "d-vc", "d-bot"])}${buttons(["d-left", "d-hc", "d-right"])}</div><i class="sep"></i>
    <div class="cluster">${buttons(["auto"])}</div><i class="sep"></i>
    <div class="mode"><span>3D Mode:</span>${["orbit", "roll", "slide", "move", "cam"].map(i => btn(i, i)).join("")}</div>${right}</div>`;
}

function tools(s) {
  const on = s.first ? "marquee" : "move";
  return `<aside class="tools"><div class="head">${icon("expand", "s")}</div><i class="rub"></i>
    <div class="toolgrid">${TOOLS.map(t => btn(t, t, t === on ? "on" : t === "zoom" ? "plain" : "")).join("")}</div>
    <div class="mini">${icon("defaults")}${icon("swap")}</div><div class="colors"><b></b><i></i></div>
    ${btn("mask", "Quick mask", "modebtn")}${btn("screenmode", "Screen mode", "modebtn more")}</aside>`;
}

function doc(cls, active, title, count, rows, zoom, size, canvas) {
  return `<section class="doc ${cls} ${active ? "active" : ""}">
    <div class="title">${icon("psdoc")}<h2>${title}</h2>${windowButtons("max")}</div>
    <div class="frame"><i></i><div class="hr">${range(count).map(i => `<span>${i}</span>`).join("")}</div><i></i>
    <div class="vr">${range(rows).map(i => `<span>${i}</span>`).join("")}</div>${canvas}<i></i>
    <div class="status"><b>${zoom}</b><span>${size} <i>❭</i></span></div></div></section>`;
}

function layers(s) {
  const eye = btn("eye", "Visibility", "", "m");
  const list = s.first
    ? `<li class="ly sel single">${eye}<div class="body-cell"><i class="thumb low"></i><em>Background</em>${icon("lockline", "m")}</div></li>`
    : `<li class="ly sel">${eye}<div class="body-cell"><i class="thumb clear"><b class="patch at-${s.pos}"></b>
        <svg viewBox="0 0 47 47"><path d="M16 .5H.5V16M31 .5h15.500V16M16 46.500H.5V31M31 46.500h15.500V31" fill="none" stroke="#fff"/></svg></i><span>Any Name You Want</span></div></li>
       <li class="ly">${eye}<div class="body-cell"><i class="thumb"></i><em>Background</em>${icon("lockline", "m")}</div></li>`;
  const num = name => `<label>${name}:<span class="pick num"><input type="text" value="100%">${icon("chev", "s")}</span></label>`;
  return `<aside class="layers ${s.first ? "dim" : ""}"><div class="head">${icon("collapse", "s")}${icon("close", "s")}</div>
    <div class="tabs"><a href="#">Layers</a>${btn("burger", "Panel menu", "", "m")}</div>
    <div class="row filter"><span class="pick kind">${icon("search", "find")}<select aria-label="Filter"><option>Kind</option></select>${icon("chev", "s")}</span>
      ${["f-image", "f-adjust", "type", "f-shape", "f-smart"].map(i => icon(i)).join("")}<i class="toggle"></i></div>
    <div class="row"><span class="pick blend"><select aria-label="Blend mode"><option>Normal</option></select>${icon("chev", "s")}</span>${num("Opacity")}</div>
    <div class="row last"><span class="lk">Lock:</span>${["l-trans", "brush", "move", "l-board", "lock"].map(i => icon(i)).join("")}${num("Fill")}</div>
    <ul class="list">${list}</ul>
    <div class="foot">${["link", "fx", "addmask", "f-adjust", "folder", "newlayer", "trash"].map(i => icon(i)).join("")}</div><i class="pull"></i></aside>`;
}

const dialog = () => `<section class="dialog" role="dialog" aria-label="Duplicate Layer">
  <header><span>Duplicate Layer</span>${btn("closethin", "Close", "", "m")}</header>
  <form><div class="fields">
    <div class="line2"><b>Duplicate:</b><span>Background</span></div>
    <div class="line2"><label for="as">As:</label><input id="as" type="text" value="Any Name You Want"></div>
    <fieldset><legend>Destination</legend>
      <div class="line2"><label for="target">Document:</label><span class="pick open"><select id="target"><option>Untitled-1</option></select>${icon("chev", "s")}</span></div>
      <div class="line2"><b class="off">Artboard:</b></div>
      <div class="line2"><b class="off">Name:</b></div>
    </fieldset>
    <ul class="drop"><li>Untitled-1</li><li class="hot">Untitled-2</li><li>Clipboard</li><li>New</li></ul>
  </div><div class="acts"><button type="button">OK</button><button type="button">Cancel</button></div></form></section>`;

function step(s) {
  const patch = s.pos ? `<i class="patch at-${s.pos}"></i>` : "";
  const two = s.first ? "Untitled-2 @ 16.7% (RGB/8) *" : "Untitled-2 @ 16.7% (Any Name You Want, RGB/8) *";
  const cls = [s.menu ? "out" : "in", s.first && "first", s.cut && "cut", s.short && "short"].filter(Boolean).join(" ");
  return `<section class="step ${cls}">
    <div class="app">${menubar(s)}${options(s)}
      <div class="body">${tools(s)}
        <div class="center"><div class="docs">
          ${doc("one", s.first, "Untitled-1 @ 100% (RGB/8) *", 7, 5, "100%", "Doc: 1.00M/0 bytes", '<div class="canvas"></div>')}
          ${doc("two", !s.first, two, 16, 16, "16.67%", s.first ? "Doc: 65.9M/0 bytes" : "Doc: 65.9M/4.00M", `<div class="canvas ${s.ants ? "ants" : ""}">${patch}</div>`)}
        </div><div class="timeline"><a href="#" class="on">Timeline</a><a href="#">Measurement Log</a>${btn("burger", "Panel menu", "", "m")}</div></div>
        <aside class="dock"><div class="head">${icon("collapse", "s")}</div>${DOCK.map(g =>
          `<ul class="${["", "", "two", "three"][g.length]}">${g.map(i => `<li>${icon(i)}</li>`).join("")}</ul>`).join("")}</aside>
      </div>${layers(s)}${s.menu ? menu(s) : ""}${s.first ? dialog() : ""}</div>
    <div class="taskbar"><i></i><b></b><time>${s.clock || ""}</time></div></section>`;
}

document.getElementById("steps").innerHTML = STEPS.map(step).join("");
```
